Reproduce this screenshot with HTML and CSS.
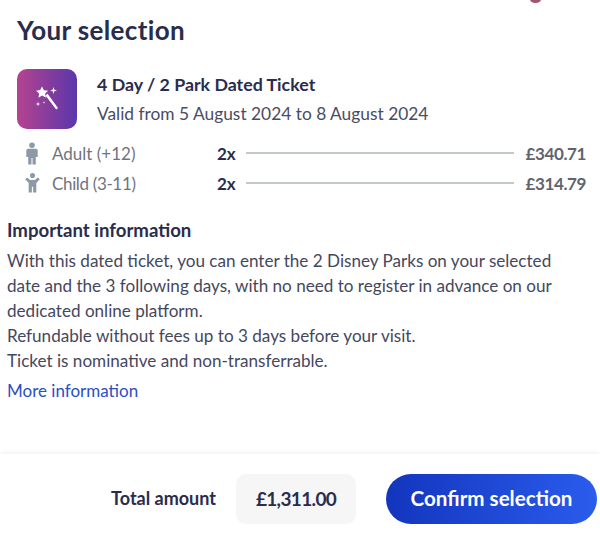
FILE: index.html
```html
<!DOCTYPE html>
<html lang="en">

<head>
    <meta charset="UTF-8">
    <meta name="viewport" content="width=device-width, initial-scale=1.0">
    <title>Your selection</title>
    <link rel="stylesheet" href="styles.css">
</head>

<body>

    <span class="top-dot"></span>

    <main class="content">
        <h1 class="title">Your selection</h1>

        <div class="ticket">
            <div class="ticket-icon">
                <svg width="26" height="26" viewBox="0 0 26 26">
                    <path d="M8 .5l1.900 3.800 4.200.4-3 2.900.9 4.100-3.900-2.100-3.700 2.100.7-4.100L2 4.700l4.200-.6z" fill="#fff" />
                    <path d="M11.500 9.500l2-1.800L24 22 22.200 23.500z" fill="#fff" />
                    <path d="M19.500 1l.8 2.700 2.700.8-2.700.8-.8 2.700-.8-2.700-2.700-.8 2.700-.8z" fill="#fff" />
                    <path d="M4 15.500l.5 2 2 .5-2 .5-.5 2-.5-2-2-.5 2-.5z" fill="#fff" />
                    <path d="M10 15l.3 1.200 1.200.3-1.200.3-.3 1.200-.3-1.200-1.200-.3 1.200-.3z" fill="#fff" />
                </svg>
            </div>
            <div class="ticket-text">
                <div class="ticket-name">4 Day / 2 Park Dated Ticket</div>
                <div class="ticket-dates">Valid from 5 August 2024 to 8 August 2024</div>
            </div>
        </div>

        <div class="rows">
            <div class="row">
                <svg class="person" width="14" height="25" viewBox="0 0 16 26">
                    <circle cx="8" cy="3.500" r="3.200" fill="#8d99a6" />
                    <path d="M3.500 7.500h9a2 2 0 0 1 2 2v7.500h-2.200V25.500H8.600V18H7.400v7.500H3.700V17H1.500V9.500a2 2 0 0 1 2-2z" fill="#8d99a6" />
                </svg>
                <span class="row-label">Adult (+12)</span>
                <span class="row-qty">2x</span>
                <span class="row-line"></span>
                <span class="row-price">£340.71</span>
            </div>
            <div class="row">
                <svg class="person" width="15" height="20" viewBox="0 0 16 22">
                    <circle cx="8" cy="2.800" r="2.800" fill="#8d99a6" />
                    <path d="M0 6.800l2-1.800 3.400 2.800h5.200L14 5l2 1.800-3.800 4.200V21.500H8.700v-6.500H7.300v6.500H3.800V11z" fill="#8d99a6" />
                </svg>
                <span class="row-label row-label-child">Child (3-11)</span>
                <span class="row-qty">2x</span>
                <span class="row-line"></span>
                <span class="row-price">£314.79</span>
            </div>
        </div>

        <section class="info">
            <h2 class="info-title">Important information</h2>
            <p class="info-text">With this dated ticket, you can enter the 2 Disney Parks on your selected
                date and the 3 following days, with no need to register in advance on our
                dedicated online platform.<br>
                Refundable without fees up to 3 days before your visit.<br>
                Ticket is nominative and non-transferrable.</p>
            <a class="info-link" href="#">More information</a>
        </section>
    </main>

    <footer class="footer">
        <span class="total-label">Total amount</span>
        <span class="total-value">£1,311.00</span>
        <button class="confirm">Confirm selection</button>
    </footer>

</body>

</html>
```

FILE: styles.css
```css
* {
    box-sizing: border-box;
}

html,
body {
    height: 100%;
}

body {
    margin: 0;
    height: 533px;
    overflow: hidden;
    font-family: "Lato", "Open Sans", sans-serif;
    color: #2a2c4d;
    background-color: #fff;
    display: flex;
    flex-direction: column;
    position: relative;
}

.top-dot {
    position: absolute;
    top: -4px;
    left: 530px;
    width: 11px;
    height: 7px;
    border-radius: 50%;
    background-color: #a0566c;
}

.content {
    flex: 1;
    padding: 15px 7px 0;
}

.title {
    margin: 0 0 24px 10px;
    font-size: 26px;
    line-height: 30px;
    font-weight: 700;
    letter-spacing: 0.35px;
}

.ticket {
    display: flex;
    align-items: center;
    gap: 20px;
    margin-left: 10px;
}

.ticket-icon {
    width: 60px;
    height: 60px;
    border-radius: 10px;
    background: linear-gradient(90deg, #b5438f, #5a37ab);
    display: flex;
    justify-content: center;
    align-items: center;
}

.ticket-name {
    font-size: 17.8px;
    line-height: 22px;
    font-weight: 700;
    margin-bottom: 8px;
}

.ticket-dates {
    font-size: 17.35px;
    line-height: 22px;
    color: #4a4c63;
}

.rows {
    margin-top: 9px;
    padding-right: 7px;
}

.row {
    display: flex;
    align-items: center;
    height: 30px;
}

.person {
    margin-left: 18px;
    flex-shrink: 0;
}

.row-label {
    margin-left: 13px;
    width: 165px;
    font-size: 17px;
    color: #70747f;
}

.row-label-child {
    margin-left: 12px;
    letter-spacing: -0.35px;
}

.row-qty {
    width: 29px;
    font-size: 17px;
    font-weight: 700;
}

.row-line {
    flex: 1;
    height: 2px;
    background-color: #c3c8cb;
}

.row-price {
    margin-left: 12px;
    font-size: 17px;
    font-weight: 700;
    letter-spacing: -0.4px;
    color: #60646f;
}

.info {
    margin-top: 20px;
}

.info-title {
    margin: 0;
    font-size: 18.6px;
    line-height: 25px;
    font-weight: 700;
}

.info-text {
    margin: 5px 0 0;
    max-width: 560px;
    font-size: 17.1px;
    line-height: 25px;
    color: #45475e;
}

.info-link {
    display: block;
    margin-top: 5px;
    font-size: 17px;
    line-height: 25px;
    color: #2a4fc4;
    text-decoration: none;
}

.footer {
    height: 79px;
    box-shadow: 0 -2px 4px rgba(0, 0, 0, 0.05);
    padding: 20px 3px 0 0;
    display: flex;
    justify-content: flex-end;
    align-items: flex-start;
}

.total-label {
    line-height: 49px;
    font-size: 18px;
    font-weight: 700;
    margin-right: 20px;
}

.total-value {
    width: 120px;
    height: 50px;
    line-height: 49px;
    border-radius: 10px;
    background-color: #f6f6f7;
    text-align: center;
    font-size: 19px;
    letter-spacing: -0.65px;
    font-weight: 700;
    margin-right: 30px;
}

.confirm {
    width: 211px;
    height: 50px;
    padding: 0 0 2px;
    border: none;
    border-radius: 25px;
    background: linear-gradient(90deg, #1335bd, #2a5ced);
    color: #fff;
    font-family: inherit;
    font-size: 20.6px;
    font-weight: 700;
    cursor: pointer;
}
```
